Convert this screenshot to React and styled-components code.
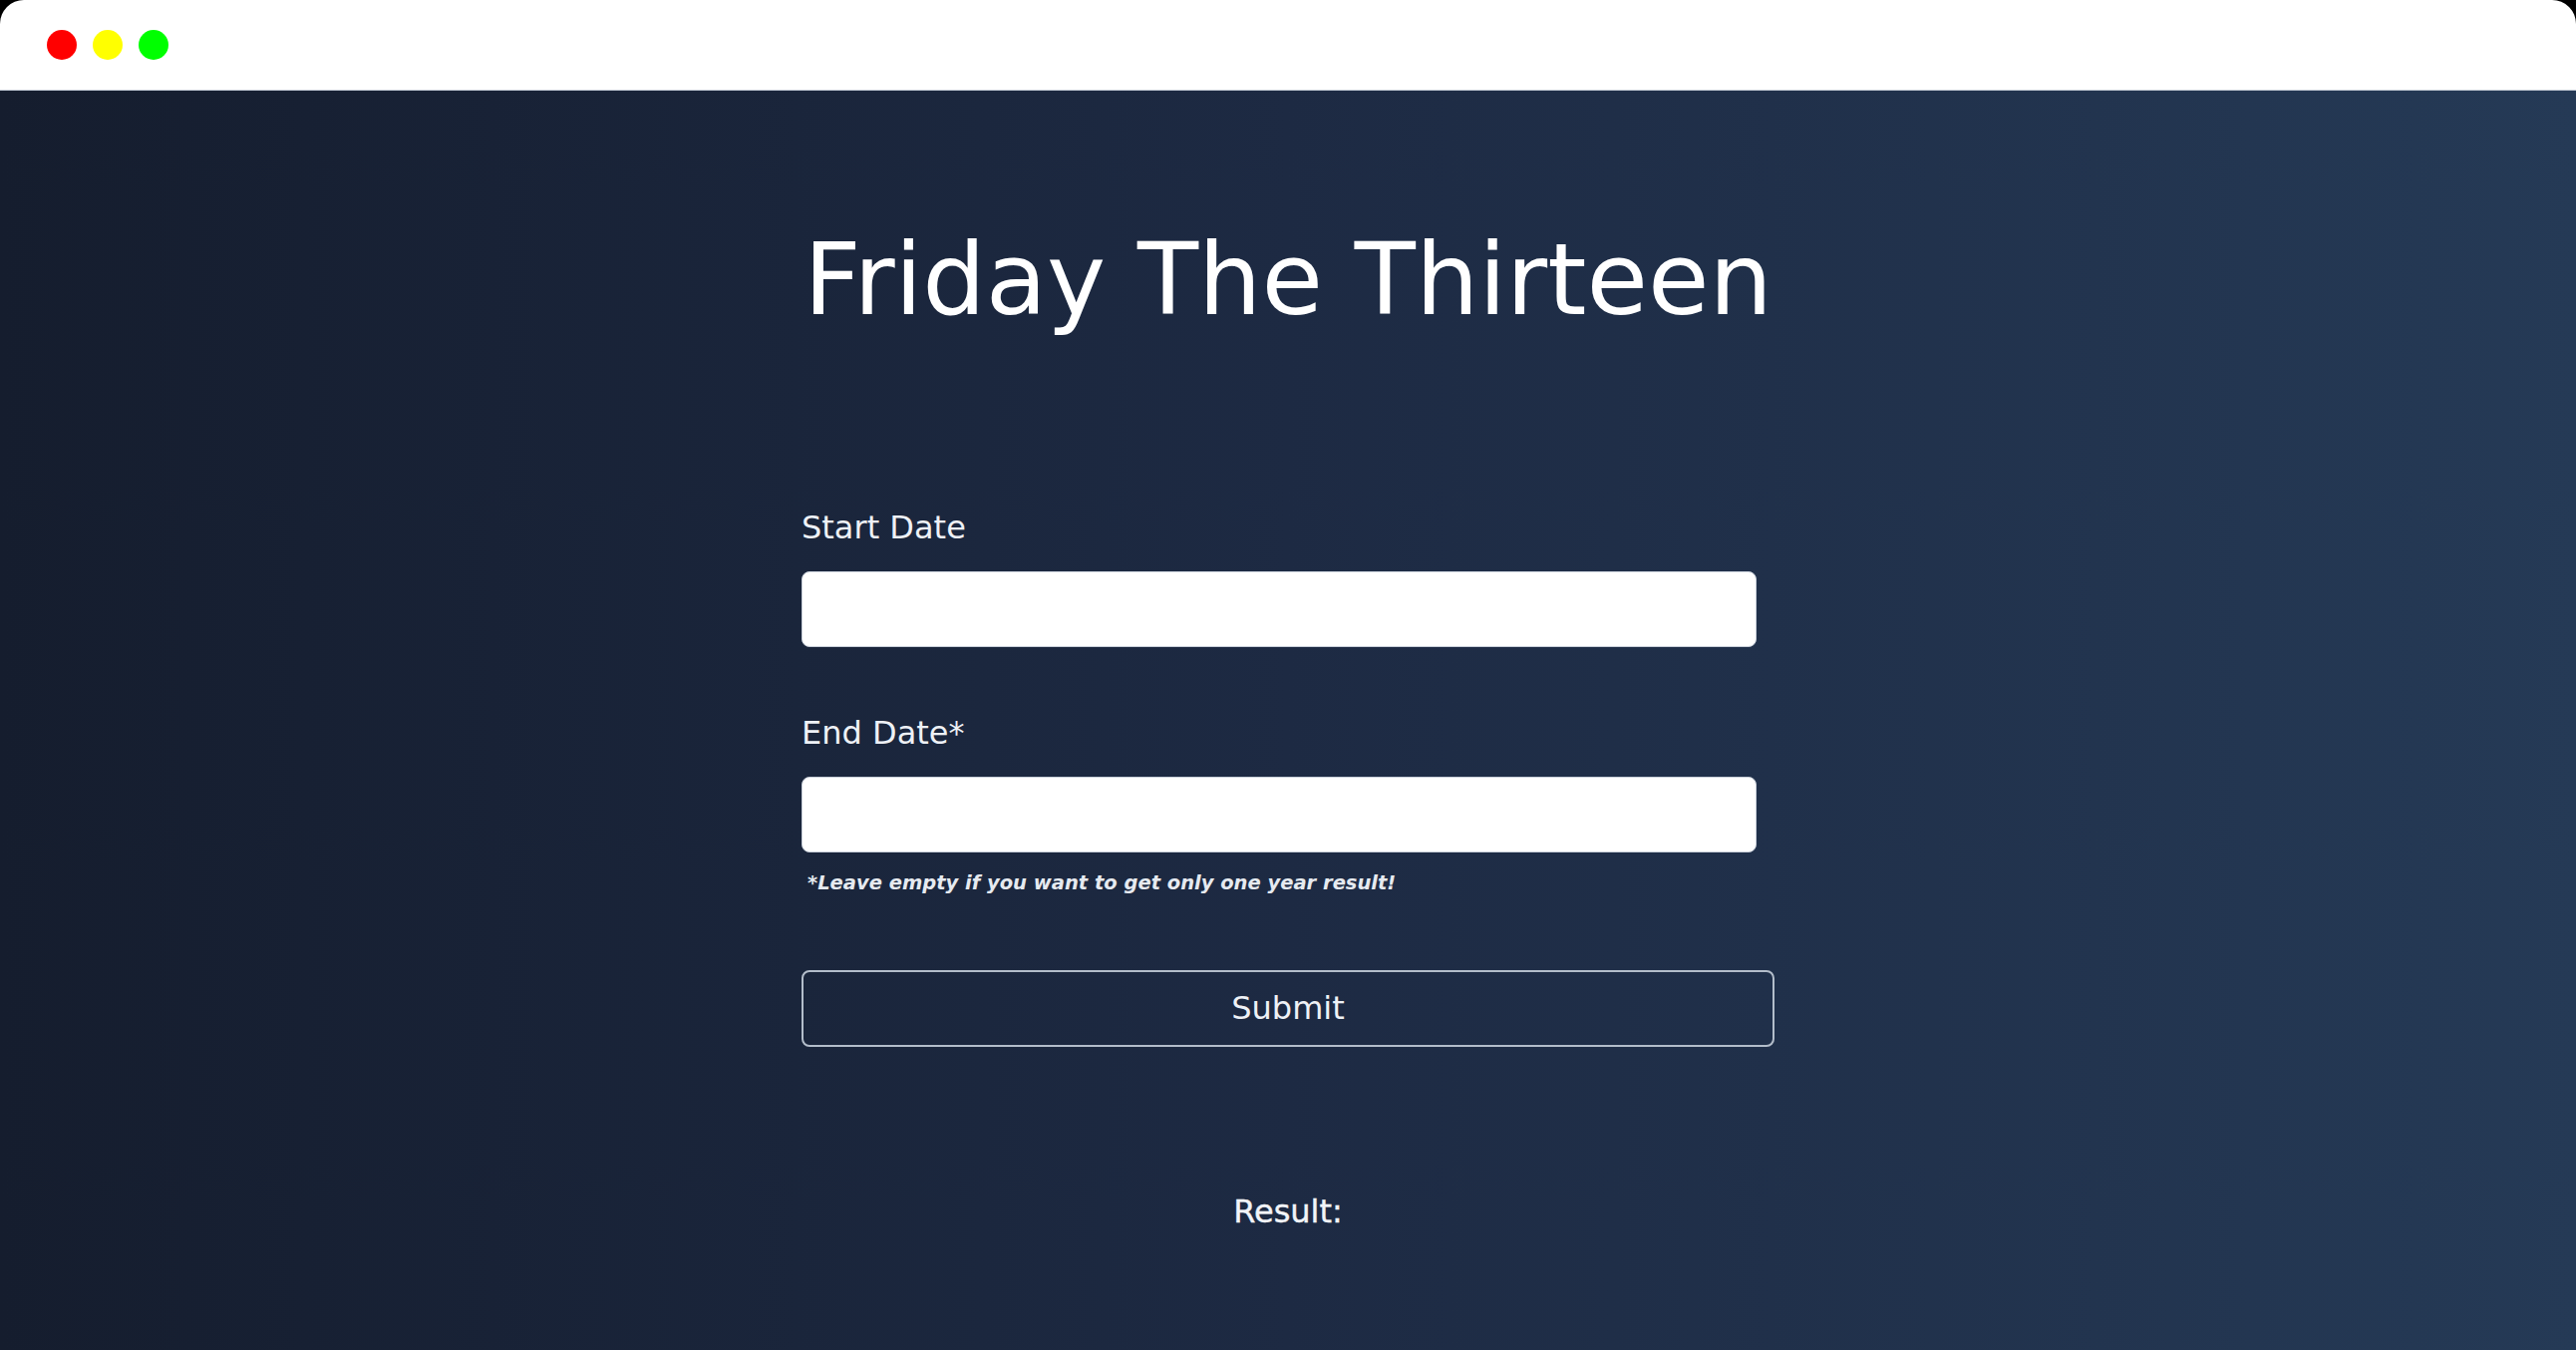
import React from 'react';
import styled, { createGlobalStyle } from 'styled-components';

const GlobalStyle = createGlobalStyle`
  html, body { margin: 0; padding: 0; background: #000; }
  body { font-family: 'DejaVu Sans', Verdana, sans-serif; }
  * { box-sizing: border-box; }
`;

const Window = styled.div`
  width: 2584px;
  height: 1354px;
  display: flex;
  flex-direction: column;
  border-radius: 24px 24px 0 0;
  overflow: hidden;
`;

const TitleBar = styled.div`
  height: 91px;
  flex-shrink: 0;
  background: #ffffff;
  border-bottom: 1px solid #b4bcc8;
  display: flex;
  align-items: center;
  gap: 16px;
  padding: 0 0 0 47px;
`;

const Dot = styled.span`
  width: 30px;
  height: 30px;
  border-radius: 50%;
  background: ${(p) => p.color};
`;

const Main = styled.main`
  flex: 1;
  background: linear-gradient(to right, #151d2e 0%, #1d2a43 50%, #253a56 100%);
  display: flex;
  flex-direction: column;
  align-items: center;
  padding-top: 140px;
  color: #eef1f6;
`;

const Title = styled.h1`
  margin: 0;
  font-size: 100px;
  line-height: 1;
  font-weight: 400;
  color: #ffffff;
`;

const Form = styled.form`
  width: 976px;
  margin-top: 182px;
  display: flex;
  flex-direction: column;
`;

const Label = styled.label`
  font-size: 32px;
  line-height: 1;
  color: #eef1f6;
  margin-top: ${(p) => p.$top || 0}px;
`;

const Input = styled.input`
  width: 958px;
  height: 76px;
  margin-top: 28px;
  border: 1px solid #c9d0da;
  border-radius: 8px;
  background: #ffffff;
  font-size: 28px;
  padding: 0 16px;
  outline: none;
`;

const Hint = styled.small`
  margin-top: 21px;
  padding-left: 6px;
  font-size: 19.5px;
  line-height: 1;
  font-weight: 700;
  font-style: italic;
  color: #e6eaf0;
`;

const SubmitButton = styled.button`
  margin-top: 77px;
  width: 100%;
  height: 77px;
  background: transparent;
  border: 2px solid #b3bdca;
  border-radius: 8px;
  color: #eef1f6;
  font-family: 'DejaVu Sans', Verdana, sans-serif;
  font-size: 32px;
  cursor: pointer;
`;

const Result = styled.p`
  margin: 149px 0 0;
  font-size: 32px;
  line-height: 1;
  color: #f2f4f8;
  -webkit-text-stroke: 0.4px #f2f4f8;
`;

const App = () => (
  <>
    <GlobalStyle />
    <Window>
      <TitleBar>
        <Dot color="#ff0000" />
        <Dot color="#ffff00" />
        <Dot color="#00ff00" />
      </TitleBar>
      <Main>
        <Title>Friday The Thirteen</Title>
        <Form onSubmit={(e) => e.preventDefault()}>
          <Label htmlFor="start">Start Date</Label>
          <Input id="start" type="text" />
          <Label htmlFor="end" $top={70}>End Date*</Label>
          <Input id="end" type="text" />
          <Hint>*Leave empty if you want to get only one year result!</Hint>
          <SubmitButton type="submit">Submit</SubmitButton>
        </Form>
        <Result>Result:</Result>
      </Main>
    </Window>
  </>
);

export default App;
